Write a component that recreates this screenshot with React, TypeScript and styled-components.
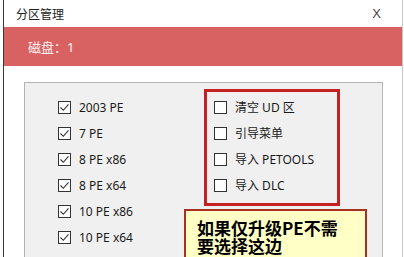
import React from 'react';
import styled, { createGlobalStyle } from 'styled-components';

const GlobalStyle = createGlobalStyle`
 html, body {
  margin: 0;
  padding: 0;
  background: #ffffff;
  width: 404px;
  height: 257px;
  overflow: hidden;
  font-family: "Noto Sans", "Noto Sans CJK SC", sans-serif;
 }
`;

const leftItems = ['2003 PE', '7 PE', '8 PE x86', '8 PE x64', '10 PE x86', '10 PE x64'];
const rightItems = ['清空 UD 区', '引导菜单', '导入 PETOOLS', '导入 DLC'];

function CheckIcon() {
 return (
  <svg width="11" height="11" viewBox="0 0 11 11">
   <path d="M1.5 5.5 L4.3 8.3 L9.5 2.3" fill="none" stroke="#333" strokeWidth="1.1" />
  </svg>
 );
}

function Option(props: { label: string; checked: boolean }) {
 return (
  <Row>
   <Box>{props.checked && <CheckIcon />}</Box>
   <Label>{props.label}</Label>
  </Row>
 );
}

export default function App() {
 return (
  <>
   <GlobalStyle />
   <Window>
    <TitleBar>
     <Title>分区管理</Title>
     <Close>X</Close>
    </TitleBar>
    <DiskBand>磁盘：1</DiskBand>
    <Content>
     <Group>
      <LeftColumn>
       {leftItems.map((item) => (
        <Option key={item} label={item} checked />
       ))}
      </LeftColumn>
      <Highlight>
       {rightItems.map((item) => (
        <Option key={item} label={item} checked={false} />
       ))}
      </Highlight>
     </Group>
    </Content>
    <Callout>
     如果仅升级PE不需
     <br />
     要选择这边
    </Callout>
   </Window>
  </>
 );
}

/* Styled Components */

const Window = styled.div`
 position: relative;
 margin-left: 3px;
 width: 398px;
 height: 257px;
 border-left: 1px solid #3a3a3a;
 border-right: 1px solid #c8c8c8;
 background: #ffffff;
 overflow: hidden;
`;

const TitleBar = styled.div`
 display: flex;
 align-items: center;
 justify-content: space-between;
 height: 27px;
 padding: 0 21px 0 12px;
`;

const Title = styled.span`
 font-size: 12px;
 color: #222;
`;

const Close = styled.span`
 font-size: 13px;
 color: #444;
 font-family: "Liberation Sans", sans-serif;
`;

const DiskBand = styled.div`
 height: 39px;
 display: flex;
 align-items: center;
 padding-left: 24px;
 background: #d86262;
 color: #fff2f2;
 font-size: 13px;
`;

const Content = styled.div`
 padding: 16px 0 0 20px;
`;

const Group = styled.div`
 display: flex;
 align-items: flex-start;
 width: 357px;
 height: 200px;
 padding: 0;
 border: 1px solid #b4b4b4;
 background: #f0f0f0;
`;

const LeftColumn = styled.div`
 display: flex;
 flex-direction: column;
 width: 146px;
 padding: 11px 0 0 33px;
`;

const Highlight = styled.div`
 display: flex;
 flex-direction: column;
 margin-top: 6px;
 width: 123px;
 padding: 2px 0 5px 7px;
 border: 3px solid #c42222;
`;

const Row = styled.div`
 display: flex;
 align-items: center;
 gap: 8px;
 height: 26px;
`;

const Box = styled.div`
 display: flex;
 align-items: center;
 justify-content: center;
 box-sizing: border-box;
 width: 13px;
 height: 13px;
 border: 1px solid #333;
 background: #ffffff;
`;

const Label = styled.span`
 font-size: 12px;
 color: #1a1a1a;
`;

const Callout = styled.div`
 position: absolute;
 left: 180px;
 top: 209px;
 width: 168px;
 height: 60px;
 padding: 8px 0 0 11px;
 border: 2px solid #a8301f;
 background: #ffffc6;
 font-family: "Noto Sans CJK SC", sans-serif;
 font-weight: 700;
 font-size: 17px;
 line-height: 18px;
 color: #000;
 white-space: nowrap;
`;
